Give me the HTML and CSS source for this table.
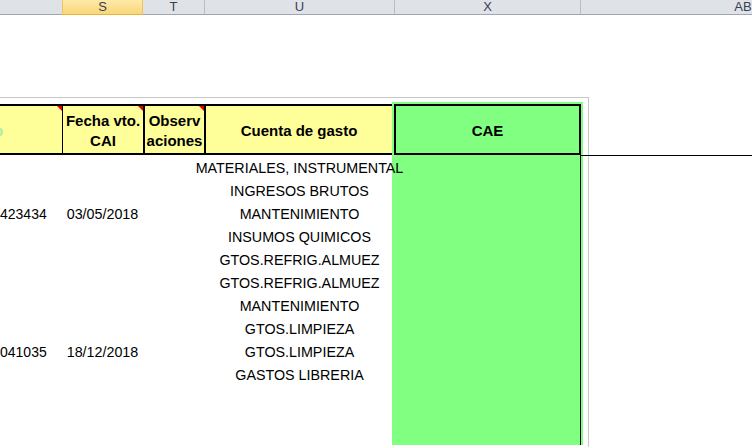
FILE: index.html
```html
<!DOCTYPE html>
<html lang="es">
<head>
<meta charset="utf-8">
<title>Hoja</title>
<link rel="stylesheet" href="styles.css">
</head>
<body>
  <div class="colbar">
    <div class="col w-r"></div>
    <div class="col w-s selected">S</div>
    <div class="col w-t">T</div>
    <div class="col w-u">U</div>
    <div class="col w-x">X</div>
    <div class="col w-ab">AB</div>
  </div>

  <div class="frame">
    <div class="data">
      <div class="hrow">
        <div class="cell c0 hc left"><span class="ghost">o</span><i class="note"></i></div>
        <div class="cell cS hc">Fecha vto.<br>CAI<i class="note"></i></div>
        <div class="cell cT hc">Observ<br>aciones<i class="note"></i></div>
        <div class="cell cU hc">Cuenta de gasto</div>
      </div>
      <div class="drow"><div class="cell c0"></div><div class="cell cS"></div><div class="cell cT"></div><div class="cell cU">MATERIALES, INSTRUMENTAL</div></div>
      <div class="drow"><div class="cell c0"></div><div class="cell cS"></div><div class="cell cT"></div><div class="cell cU">INGRESOS BRUTOS</div></div>
      <div class="drow"><div class="cell c0 num">423434</div><div class="cell cS">03/05/2018</div><div class="cell cT"></div><div class="cell cU">MANTENIMIENTO</div></div>
      <div class="drow"><div class="cell c0"></div><div class="cell cS"></div><div class="cell cT"></div><div class="cell cU">INSUMOS QUIMICOS</div></div>
      <div class="drow"><div class="cell c0"></div><div class="cell cS"></div><div class="cell cT"></div><div class="cell cU">GTOS.REFRIG.ALMUEZ</div></div>
      <div class="drow"><div class="cell c0"></div><div class="cell cS"></div><div class="cell cT"></div><div class="cell cU">GTOS.REFRIG.ALMUEZ</div></div>
      <div class="drow"><div class="cell c0"></div><div class="cell cS"></div><div class="cell cT"></div><div class="cell cU">MANTENIMIENTO</div></div>
      <div class="drow"><div class="cell c0"></div><div class="cell cS"></div><div class="cell cT"></div><div class="cell cU">GTOS.LIMPIEZA</div></div>
      <div class="drow"><div class="cell c0 num">041035</div><div class="cell cS">18/12/2018</div><div class="cell cT"></div><div class="cell cU">GTOS.LIMPIEZA</div></div>
      <div class="drow"><div class="cell c0"></div><div class="cell cS"></div><div class="cell cT"></div><div class="cell cU">GASTOS LIBRERIA</div></div>
    </div>
    <div class="cae">
      <div class="cae-head">CAE</div>
      <div class="cae-body"></div>
    </div>
  </div>

  <div class="hline"></div>
</body>
</html>
```

FILE: styles.css
```css
* {
  box-sizing: border-box;
  margin: 0;
  padding: 0;
}

html, body {
  width: 752px;
  height: 447px;
  overflow: hidden;
  background: #ffffff;
}

body {
  position: relative;
  font-family: "Liberation Sans", Arial, sans-serif;
  color: #000000;
}

/* ---------- column header bar ---------- */
.colbar {
  display: flex;
  height: 15px;
  background: #dfe3e8;
  border-bottom: 1px solid #9fa6af;
}

.col {
  flex: none;
  height: 14px;
  text-align: center;
  font-size: 13px;
  line-height: 14px;
  color: #3b4050;
  border-right: 1px solid #b7bec6;
}

.w-r  { width: 62px; border-right: none; }
.w-s  { width: 81px; }
.w-t  { width: 62px; }
.w-u  { width: 190px; }
.w-x  { width: 186px; }
.w-ab { width: 324px; border-right: none; }

.col.selected {
  background: linear-gradient(#fdeaa9, #f9d67a);
  border-left: 1px solid #efc555;
  border-right: 1px solid #efc555;
  border-bottom: 1px solid #e8b53c;
  height: 15px;
}

/* ---------- sheet area ---------- */
.frame {
  display: flex;
  align-items: flex-start;
  width: 589px;
  height: 350px;
  margin-top: 82px;
  padding-top: 4px;
  border-top: 1px solid #c8c8c8;
  border-right: 1px solid #c8c8c8;
}

.data {
  position: relative;
  z-index: 1;
  flex: none;
  width: 392px;
  margin-top: 2px;
}

.hrow {
  display: flex;
  height: 51px;
  background: #ffff99;
  border-top: 2px solid #000;
  border-bottom: 2px solid #000;
}

.cell {
  flex: none;
  display: flex;
  align-items: center;
  justify-content: center;
  text-align: center;
  white-space: nowrap;
}

.c0 { width: 62px; }
.cS { width: 81px; }
.cT { width: 61px; }
.cU { width: 188px; }

.hc {
  position: relative;
  padding-top: 2px;
  font-weight: bold;
  font-size: 15px;
  line-height: 20px;
}

.hrow .cS { border-left: 1px solid #000; }
.hrow .cT { border-left: 2px solid #000; }
.hrow .cU { border-left: 2px solid #000; }

.hc.left {
  justify-content: flex-start;
  overflow: hidden;
}

.ghost {
  margin-left: -6px;
  color: #a6eea6;
  font-weight: bold;
}

.note {
  position: absolute;
  top: 0;
  right: 0;
  width: 0;
  height: 0;
  border-top: 5px solid #e00000;
  border-left: 5px solid transparent;
}

.drow {
  display: flex;
  height: 23px;
  font-size: 14.3px;
  line-height: 27px;
}

.drow .cell {
  align-items: flex-start;
  height: 23px;
  overflow: visible;
}

.drow .cU {
  padding-left: 3px;
}

.drow .num {
  justify-content: flex-start;
  font-size: 14px;
  padding-left: 0;
}

/* ---------- CAE column ---------- */
.cae {
  flex: none;
  display: flex;
  flex-direction: column;
  width: 191px;
  height: 343px;
  background: #80ff80;
}

.cae-head {
  flex: none;
  display: flex;
  align-items: center;
  justify-content: center;
  height: 51px;
  margin: 2px 2px 0;
  padding-top: 2px;
  border: 2px solid #000;
  font-weight: bold;
  font-size: 15px;
}

.cae-body {
  flex: 1;
  margin: 0 2px;
  border-right: 1px solid #000;
}

.hline {
  position: absolute;
  top: 155px;
  left: 581px;
  right: 0;
  height: 1px;
  background: #000;
}
```
